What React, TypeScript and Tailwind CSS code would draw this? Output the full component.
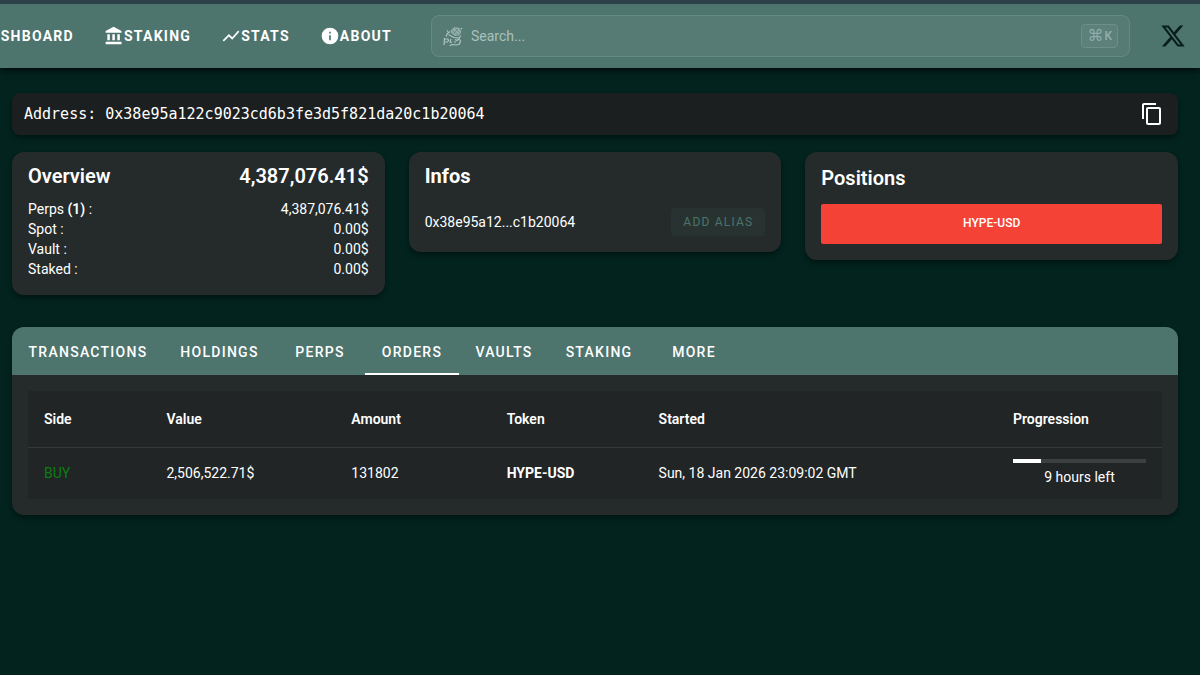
import type { ReactNode } from "react";
import { MdContentCopy } from "react-icons/md";
import { FaXTwitter } from "react-icons/fa6";

const navItems = [
  { label: "Dashboard", path: "M13 3v6h8V3m-8 18h8V11h-8M3 21h8v-6H3m0-2h8V3H3v10z" },
  { label: "Staking", path: "M11.5 1L2 6v2h19V6M16 10v7h3v-7M2 22h19v-3H2M10 10v7h3v-7M4 10v7h3v-7H4z" },
  { label: "Stats", path: "M3.5 18.5l6-6 4 4L22 6.92 20.59 5.5 13.5 13.5l-4-4L2 17l1.5 1.5z" },
  {
    label: "About",
    path: "M13 9h-2V7h2m0 10h-2v-6h2m-1-9A10 10 0 0 0 2 12a10 10 0 0 0 10 10 10 10 0 0 0 10-10A10 10 0 0 0 12 2z",
  },
];

const balances = [
  { label: "Spot :", value: "0.00$" },
  { label: "Vault :", value: "0.00$" },
  { label: "Staked :", value: "0.00$" },
];

const tabs = [
  { label: "Transactions", width: "w-[152px]" },
  { label: "Holdings", width: "w-[111px]" },
  { label: "Perps", width: "w-[90px]" },
  { label: "Orders", width: "w-[94px]" },
  { label: "Vaults", width: "w-[90px]" },
  { label: "Staking", width: "w-[100px]" },
  { label: "More", width: "w-[90px]" },
];

const order = {
  side: "BUY",
  value: "2,506,522.71$",
  amount: "131802",
  token: "HYPE-USD",
  started: "Sun, 18 Jan 2026 23:09:02 GMT",
  progress: 21,
  left: "9 hours left",
};

function MascotIcon() {
  return (
    <svg viewBox="0 0 20 20" className="size-5 shrink-0 text-[#adc5c0]" fill="none" stroke="currentColor" strokeWidth="1.2" aria-hidden="true">
      <path d="M7.5 4.5 11.5 1l5 1 2 4L16 9.5l-4 .5-3.500-2.500z" fill="currentColor" fillOpacity=".7" stroke="none" />
      <path d="m9 4 6 5M12 2l5 5M10 8l5-5" stroke="#567b75" strokeWidth=".6" />
      <path d="M7 5.500 4.500 7.500 3 10.500M1.500 12l-.5 7M5.500 8.500 8 10l3 1.500 5 .5 2-2.500" />
      <path d="M1.500 13h3.500l.5 1.500-1 1.500H2M8 13l-1 3 2 .5M12 13.500l2 1 2-1.500 1.500 2-1 3-3 1-4-.5-3 1" />
      <path d="M11 16h2M18 3l1-1M4 5.500l1-1" />
    </svg>
  );
}

function Card({ children, className }: { children: ReactNode; className: string }) {
  return <section className={`rounded-xl bg-[#252b2b] px-4 pb-4 shadow-md shadow-black/30 ${className}`}>{children}</section>;
}

export default function App() {
  return (
    <div className="min-h-screen bg-[#03231e] font-['Roboto','Liberation_Sans',sans-serif] text-sm leading-5 text-white">
      <header className="flex h-[68px] items-center border-t-4 border-[#2d414a] bg-[#4e746e] pr-[14px] shadow-md shadow-black/50">
        <nav aria-label="Main" className="flex w-[392px] shrink-0 justify-end gap-[30px] overflow-hidden">
          {navItems.map((item) => (
            <a key={item.label} href="#" className="flex shrink-0 items-center text-sm font-bold tracking-[0.09em] uppercase">
              <svg viewBox="0 0 24 24" className="size-5 fill-current" aria-hidden="true">
                <path d={item.path} />
              </svg>
              {item.label}
            </a>
          ))}
        </nav>
        <label className="ml-[39px] flex h-[42px] min-w-0 flex-1 items-center gap-2 rounded-lg border border-[#648a83] bg-[#567b75] px-[11px]">
          <MascotIcon />
          <input type="search" aria-label="Search" placeholder="Search..." className="min-w-0 flex-1 bg-transparent outline-none placeholder:text-[#a9c1bc]" />
          <kbd className="flex h-6 items-center gap-px rounded border border-[#6c8f89] bg-[#5c817b] px-[5px] font-['Roboto','DejaVu_Sans',sans-serif] text-xs font-semibold text-[#8fada8]">
            <span className="text-base font-normal">⌘</span>K
          </kbd>
        </label>
        <a href="#" aria-label="X" className="ml-[30px] text-[#07201c]">
          <FaXTwitter size={26} />
        </a>
      </header>

      <main className="pt-[25px] pr-[22px] pl-3">
        <div className="flex h-[42px] items-center justify-between rounded-lg bg-[#1c1f1f] pr-[14px] pl-3 shadow-md shadow-black/30">
          <code className="font-['DejaVu_Sans_Mono',monospace] text-[15px]">Address: 0x38e95a122c9023cd6b3fe3d5f821da20c1b20064</code>
          <button type="button" aria-label="Copy address">
            <MdContentCopy size={24} />
          </button>
        </div>

        <div className="mt-[17px] grid grid-cols-3 items-start gap-6">
          <Card className="pt-2">
            <div className="mb-[7px] flex justify-between text-xl leading-8 font-semibold">
              <h2>Overview</h2>
              <span>4,387,076.41$</span>
            </div>
            <dl>
              <div className="flex justify-between">
                <dt>
                  Perps <b className="font-semibold">(1)</b> :
                </dt>
                <dd>4,387,076.41$</dd>
              </div>
              {balances.map((row) => (
                <div key={row.label} className="flex justify-between">
                  <dt>{row.label}</dt>
                  <dd>{row.value}</dd>
                </div>
              ))}
            </dl>
          </Card>

          <Card className="pt-2">
            <h2 className="text-xl leading-8 font-bold">Infos</h2>
            <div className="mt-4 flex items-center justify-between">
              <span>0x38e95a12...c1b20064</span>
              <button type="button" className="h-7 rounded-sm bg-[#283331] px-3 text-xs tracking-widest text-[#4a736c] uppercase">
                Add alias
              </button>
            </div>
          </Card>

          <Card className="pt-[10px]">
            <h2 className="text-xl leading-8 font-semibold">Positions</h2>
            <button type="button" className="mt-[10px] h-10 w-full rounded-xs bg-[#f44336] pb-[2px] text-xs font-medium">
              HYPE-USD
            </button>
          </Card>
        </div>

        <section className="mt-8 overflow-hidden rounded-xl bg-[#252b2b] pb-4 shadow-md shadow-black/30">
          <div role="tablist" className="flex h-12 bg-[#4e746e]">
            {tabs.map((tab) => (
              <button
                key={tab.label}
                type="button"
                role="tab"
                aria-selected={tab.label === "Orders"}
                className={`border-b-2 pt-1 text-sm font-medium tracking-[0.09em] uppercase ${tab.width} ${tab.label === "Orders" ? "border-white" : "border-transparent"}`}
              >
                {tab.label}
              </button>
            ))}
          </div>
          <div className="px-4 pt-4">
            <table className="w-full table-fixed bg-[#212525] text-left">
              <thead>
                <tr className="h-14 border-b border-[#343939]">
                  <th className="w-[10.8%] px-4 font-semibold">Side</th>
                  <th className="w-[16.3%] px-4 font-semibold">Value</th>
                  <th className="w-[13.7%] px-4 font-semibold">Amount</th>
                  <th className="w-[13.4%] px-4 font-semibold">Token</th>
                  <th className="px-4 font-semibold">Started</th>
                  <th className="w-[165px] px-4 font-semibold">Progression</th>
                </tr>
              </thead>
              <tbody>
                <tr className="h-[52px]">
                  <td className="px-4 text-[#0d7d12]">{order.side}</td>
                  <td className="px-4">{order.value}</td>
                  <td className="px-4">{order.amount}</td>
                  <td className="px-4 font-bold">{order.token}</td>
                  <td className="px-4">{order.started}</td>
                  <td className="px-4 text-center">
                    <div role="progressbar" aria-label="Order progress" aria-valuenow={order.progress} className="mb-1 h-1 bg-[#3c4040]">
                      <div className="h-full bg-white" style={{ width: `${order.progress}%` }} />
                    </div>
                    {order.left}
                  </td>
                </tr>
              </tbody>
            </table>
          </div>
        </section>
      </main>
    </div>
  );
}
